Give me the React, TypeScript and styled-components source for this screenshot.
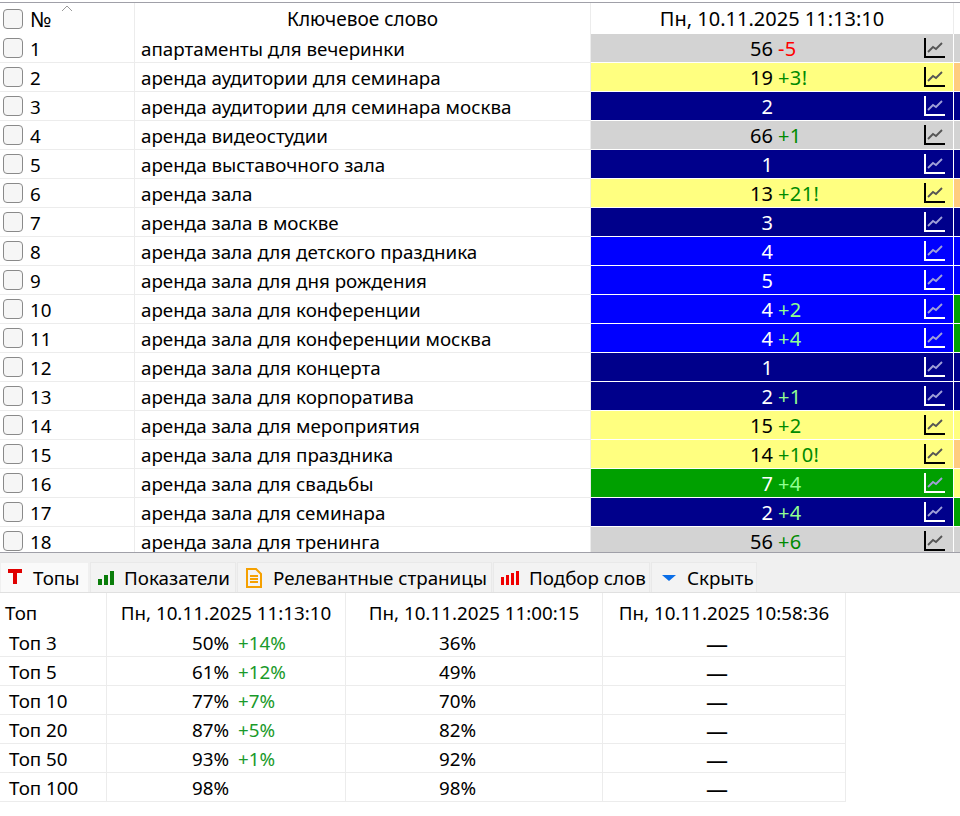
import React from "react";
import styled, { createGlobalStyle } from "styled-components";

const Global = createGlobalStyle`
  html, body { margin: 0; padding: 0; background: #fff; }
  body { width: 960px; height: 816px; overflow: hidden; font-family: "Noto Sans", "Open Sans", sans-serif; font-size: 18.8px; color: #000; }
`;

const Page = styled.div`
  width: 960px;
  height: 816px;
  display: flex;
  flex-direction: column;
  overflow: hidden;
`;

const KeywordPane = styled.div`
  height: 549px;
  margin-top: 2px;
  border-top: 1px solid #a0a0a8;
  border-bottom: 1px solid #a0a0a8;
  overflow: hidden;
  flex: none;
`;

const columns = "135px 456px 363px 6px";

const HeaderRow = styled.div`
  display: grid;
  grid-template-columns: ${columns};
  grid-template-rows: 31px;
  height: 31px;
`;

const HeaderCell = styled.div<{ $start?: boolean; $date?: boolean }>`
  display: flex;
  align-items: center;
  justify-content: ${(p) => (p.$start ? "flex-start" : "center")};
  gap: 7px;
  padding-left: ${(p) => (p.$start ? "3px" : "0")};
  border-right: 1px solid #ececec;
  position: relative;
  font-size: ${(p) => (p.$date ? "20px" : "19px")};
`;

const NumberSign = styled.span`
  font-size: 21px;
`;

const SortCaret = styled.svg`
  position: absolute;
  left: 61px;
  top: 2px;
`;

const Row = styled.div`
  display: grid;
  grid-template-columns: ${columns};
  grid-template-rows: 29px;
  height: 29px;
  line-height: 24px;
`;

const NumCell = styled.div`
  display: flex;
  align-items: center;
  gap: 7px;
  padding-left: 3px;
  border-right: 1px solid #ececec;
  border-bottom: 1px solid #ececec;
`;

const NumText = styled.span`
  padding-top: 2px;
`;

const Check = styled.span`
  width: 18px;
  height: 18px;
  flex: none;
  border: 1px solid #8a8a8a;
  border-radius: 4px;
  background: #f6f6f6;
`;

const KeywordCell = styled.div`
  display: flex;
  align-items: center;
  padding: 2px 0 0 6px;
  border-right: 1px solid #ececec;
  border-bottom: 1px solid #ececec;
  white-space: nowrap;
`;

const PosCell = styled.div<{ $bg: string; $light: boolean }>`
  position: relative;
  display: flex;
  align-items: center;
  padding-top: 2px;
  background: ${(p) => p.$bg};
  color: ${(p) => (p.$light ? "#fff" : "#000")};
  border-right: 1px solid #fff;
  border-bottom: 1px solid #fff;
  font-size: 20px;
`;

const PosNumber = styled.span`
  width: 182px;
  flex: none;
  text-align: right;
`;

const Delta = styled.span<{ $color: string }>`
  color: ${(p) => p.$color};
  margin-left: 5px;
  letter-spacing: 0.4px;
`;

const ChartIcon = styled.svg`
  position: absolute;
  left: 333px;
  top: 3px;
`;

const NextCell = styled.div<{ $bg: string }>`
  background: ${(p) => p.$bg};
  border-bottom: 1px solid #fff;
`;

const TabBar = styled.div`
  height: 40px;
  flex: none;
  box-sizing: border-box;
  background: #f0f0f0;
  padding-top: 9px;
  display: flex;
  gap: 1px;
  border-bottom: 1px solid #e0e0e0;
`;

const Tab = styled.div<{ $active?: boolean; $w: number }>`
  width: ${(p) => p.$w}px;
  box-sizing: border-box;
  display: flex;
  align-items: center;
  gap: 10px;
  padding-left: 7px;
  background: ${(p) => (p.$active ? "#fafafa" : "#f3f3f3")};
  border: 1px solid ${(p) => (p.$active ? "#f0f0f0" : "#e9e9e9")};
  border-bottom: none;
  white-space: nowrap;
`;

const TopsTable = styled.div`
  width: 846px;
  display: grid;
  grid-template-columns: 107px 239px 257px 243px;
  grid-template-rows: 35px repeat(6, 29px);
  line-height: 24px;
`;

const TopCell = styled.div<{ $head?: boolean; $first?: boolean; $pad?: number }>`
  box-sizing: border-box;
  display: flex;
  align-items: center;
  justify-content: ${(p) => (p.$first || p.$pad ? "flex-start" : "center")};
  padding-left: ${(p) => (p.$first ? (p.$head ? "5px" : "9px") : `${p.$pad || 0}px`)};
  padding-top: ${(p) => (p.$head ? "5px" : "2px")};
  border-right: 1px solid #ececec;
  border-bottom: ${(p) => (p.$head ? "none" : "1px solid #ececec")};
  white-space: nowrap;
`;

const PctDelta = styled.span`
  color: #1a9a2a;
  margin-left: 9px;
`;

const Dash = styled.span`
  font-size: 22px;
`;

const GRAY = "#d3d3d3";
const YELLOW = "#ffff80";
const NAVY = "#00008b";
const BLUE = "#0000ff";
const GREEN = "#00a000";
const ORANGE = "#ffcc80";

const rows: [string, string, string, string, string][] = [
  ["1", "апартаменты для вечеринки", GRAY, "56", "-5"],
  ["2", "аренда аудитории для семинара", YELLOW, "19", "+3!"],
  ["3", "аренда аудитории для семинара москва", NAVY, "2", ""],
  ["4", "аренда видеостудии", GRAY, "66", "+1"],
  ["5", "аренда выставочного зала", NAVY, "1", ""],
  ["6", "аренда зала", YELLOW, "13", "+21!"],
  ["7", "аренда зала в москве", NAVY, "3", ""],
  ["8", "аренда зала для детского праздника", BLUE, "4", ""],
  ["9", "аренда зала для дня рождения", BLUE, "5", ""],
  ["10", "аренда зала для конференции", BLUE, "4", "+2"],
  ["11", "аренда зала для конференции москва", BLUE, "4", "+4"],
  ["12", "аренда зала для концерта", NAVY, "1", ""],
  ["13", "аренда зала для корпоратива", NAVY, "2", "+1"],
  ["14", "аренда зала для мероприятия", YELLOW, "15", "+2"],
  ["15", "аренда зала для праздника", YELLOW, "14", "+10!"],
  ["16", "аренда зала для свадьбы", GREEN, "7", "+4"],
  ["17", "аренда зала для семинара", NAVY, "2", "+4"],
  ["18", "аренда зала для тренинга", GRAY, "56", "+6"],
];

const next = [GRAY, ORANGE, NAVY, GRAY, NAVY, ORANGE, NAVY, BLUE, BLUE, GREEN, GREEN, NAVY, NAVY, YELLOW, ORANGE, YELLOW, GREEN, GRAY];

const tops: [string, string, string, string][] = [
  ["Топ 3", "50%", "+14%", "36%"],
  ["Топ 5", "61%", "+12%", "49%"],
  ["Топ 10", "77%", "+7%", "70%"],
  ["Топ 20", "87%", "+5%", "82%"],
  ["Топ 50", "93%", "+1%", "92%"],
  ["Топ 100", "98%", "", "98%"],
];

const isLight = (bg: string) => bg === NAVY || bg === BLUE || bg === GREEN;

const deltaColor = (bg: string, d: string) => {
  if (d.startsWith("-")) return "#ff0000";
  return isLight(bg) ? "#90ff90" : "#008a00";
};

function Chart({ light }: { light: boolean }) {
  const c = light ? "#fff" : "#000";
  return (
    <ChartIcon width="22" height="22" viewBox="0 0 22 22">
      <path d="M1 1V20H21" fill="none" stroke={c} strokeWidth="2" />
      <path d="M4 15L9 10L12 12L18 6" fill="none" stroke={light ? "#a0a0d8" : "#555"} strokeWidth="1.8" />
    </ChartIcon>
  );
}

export default function App() {
  return (
    <Page>
      <Global />
      <KeywordPane>
        <HeaderRow>
          <HeaderCell $start>
            <Check />
            <NumberSign>№</NumberSign>
            <SortCaret width="12" height="7" viewBox="0 0 12 7">
              <path d="M1 6L6 1L11 6" fill="none" stroke="#9a9a9a" strokeWidth="1" />
            </SortCaret>
          </HeaderCell>
          <HeaderCell>Ключевое слово</HeaderCell>
          <HeaderCell $date>Пн, 10.11.2025 11:13:10</HeaderCell>
          <div />
        </HeaderRow>
        {rows.map(([n, kw, bg, pos, d], i) => (
          <Row key={n}>
            <NumCell>
              <Check />
              <NumText>{n}</NumText>
            </NumCell>
            <KeywordCell>{kw}</KeywordCell>
            <PosCell $bg={bg} $light={isLight(bg)}>
              <PosNumber>{pos}</PosNumber>
              {d && <Delta $color={deltaColor(bg, d)}>{d}</Delta>}
              <Chart light={isLight(bg)} />
            </PosCell>
            <NextCell $bg={next[i]} />
          </Row>
        ))}
      </KeywordPane>
      <TabBar>
        <Tab $active $w={89}>
          <svg width="15" height="18" viewBox="0 0 15 18">
            <path d="M0 0H14V4H9V15H5V4H0Z" fill="#e00000" />
          </svg>
          Топы
        </Tab>
        <Tab $w={146}>
          <svg width="16" height="16" viewBox="0 0 16 16">
            <rect x="0" y="9" width="4" height="6" fill="#0a7d0a" />
            <rect x="6" y="5" width="4" height="10" fill="#0a7d0a" />
            <rect x="12" y="1" width="4" height="14" fill="#0a7d0a" />
          </svg>
          Показатели
        </Tab>
        <Tab $w={255}>
          <svg width="18" height="20" viewBox="0 0 18 20">
            <path d="M2 1H11L16 6V19H2Z M5 8H13 M5 11H13 M5 14H13" fill="none" stroke="#f5a000" strokeWidth="2" />
          </svg>
          Релевантные страницы
        </Tab>
        <Tab $w={157}>
          <svg width="18" height="16" viewBox="0 0 18 16">
            <rect x="0" y="7" width="3" height="8" fill="#f00000" />
            <rect x="5" y="5" width="3" height="10" fill="#f00000" />
            <rect x="10" y="3" width="3" height="12" fill="#f00000" />
            <rect x="15" y="1" width="3" height="14" fill="#f00000" />
          </svg>
          Подбор слов
        </Tab>
        <Tab $w={106}>
          <svg width="18" height="8" viewBox="0 0 18 8">
            <path d="M3 1H17L10 7Z" fill="#0a6ee8" />
          </svg>
          Скрыть
        </Tab>
      </TabBar>
      <TopsTable>
        <TopCell $first $head>Топ</TopCell>
        <TopCell $head>Пн, 10.11.2025 11:13:10</TopCell>
        <TopCell $head>Пн, 10.11.2025 11:00:15</TopCell>
        <TopCell $head>Пн, 10.11.2025 10:58:36</TopCell>
        {tops.map(([t, a, d, b]) => (
          <React.Fragment key={t}>
            <TopCell $first>{t}</TopCell>
            <TopCell $pad={85}>
              {a}
              {d && <PctDelta>{d}</PctDelta>}
            </TopCell>
            <TopCell $pad={93}>{b}</TopCell>
            <TopCell $pad={103}><Dash>—</Dash></TopCell>
          </React.Fragment>
        ))}
      </TopsTable>
    </Page>
  );
}
